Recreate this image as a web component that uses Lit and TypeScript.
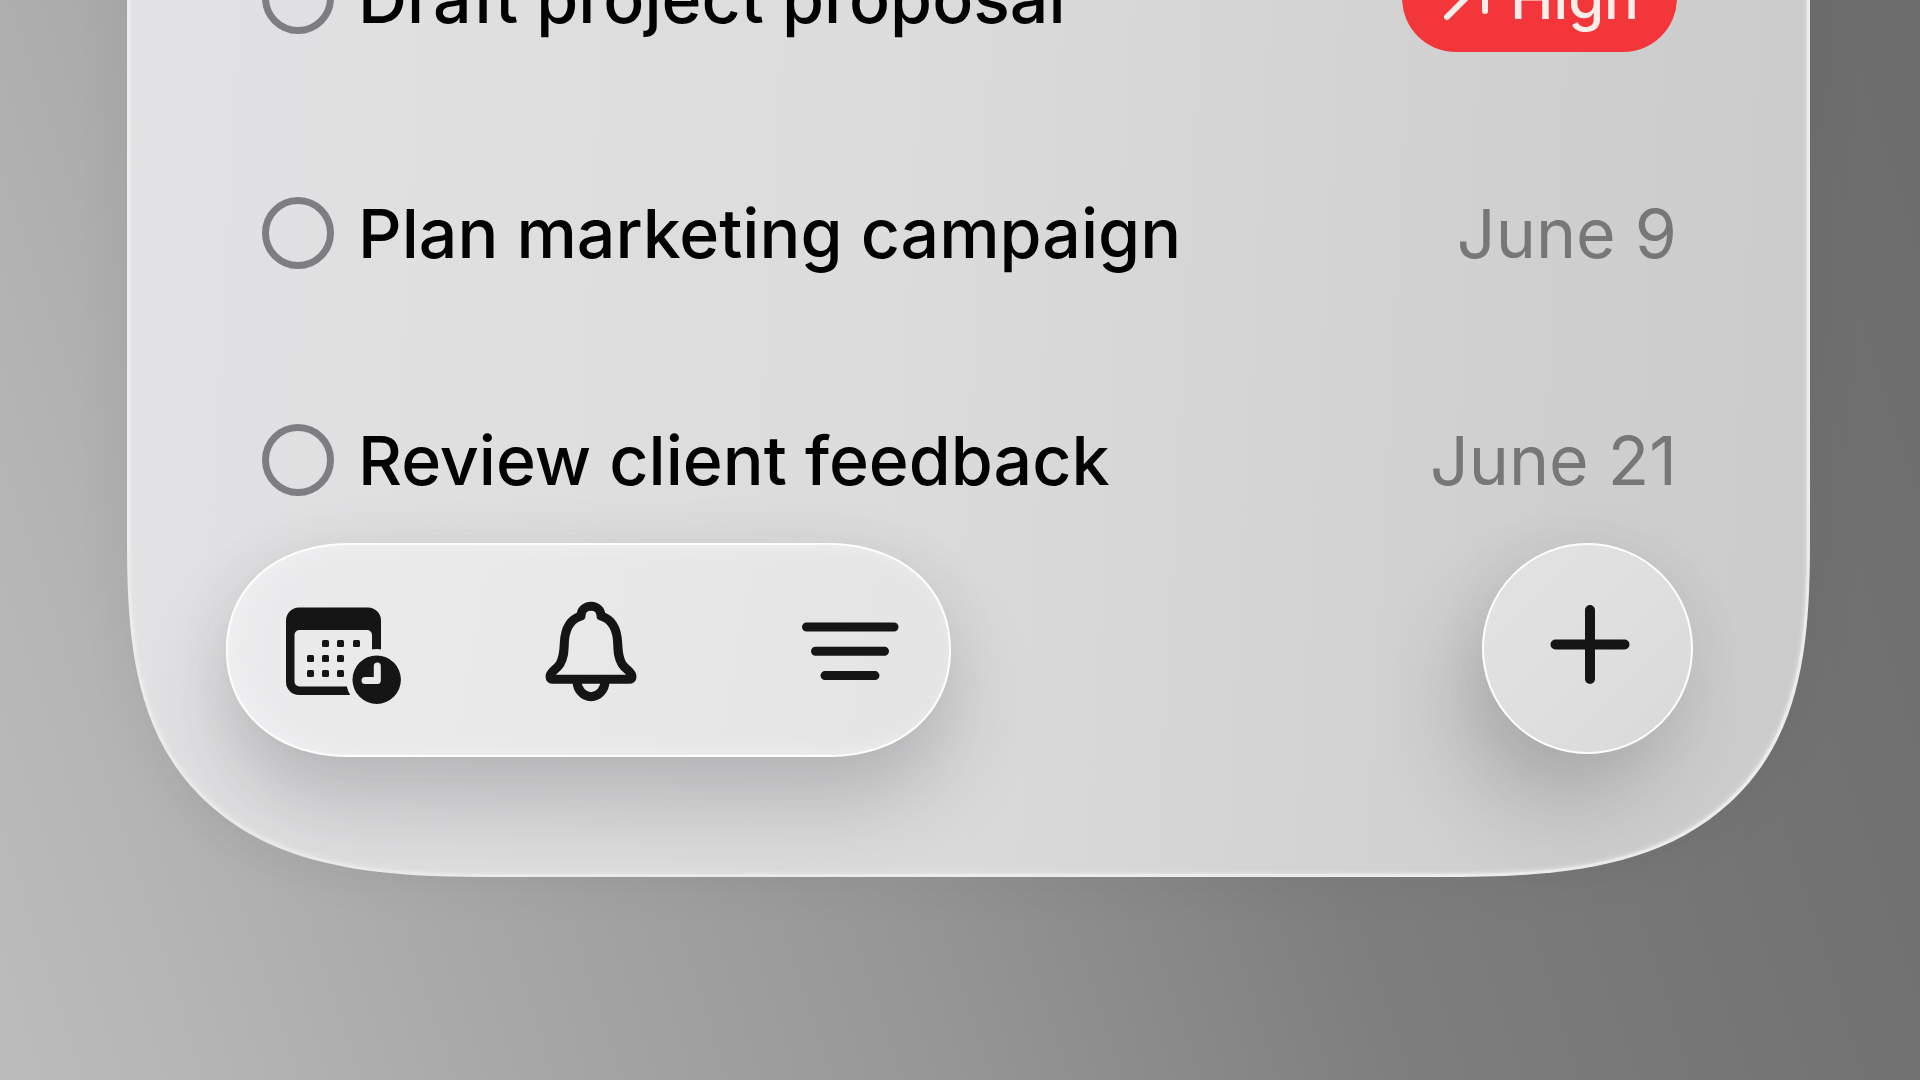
import { LitElement, html, css, svg, nothing } from "lit";
import { customElement, property } from "lit/decorators.js";

interface Task {
  id: string;
  title: string;
  due?: string;
  priority?: string;
}

const TASKS: Task[] = [
  { id: "draft", title: "Draft project proposal", priority: "High" },
  { id: "plan", title: "Plan marketing campaign", due: "June 9" },
  { id: "review", title: "Review client feedback", due: "June 21" },
];

const DOTS = [
  [36, 47], [51, 47], [67, 47],
  [21, 62], [36, 62], [51, 62],
  [21, 77], [36, 77], [51, 77],
];

@customElement("task-row")
export class TaskRow extends LitElement {
  @property({ attribute: false }) task!: Task;

  static styles = css`
    :host {
      display: flex;
      align-items: center;
      gap: 24px;
      min-height: 92px;
      font-size: 68px;
      line-height: 84px;
      white-space: nowrap;
    }
    .check {
      appearance: none;
      box-sizing: border-box;
      flex: none;
      width: 72px;
      height: 72px;
      margin: 0;
      border: 7px solid #7e7e81;
      border-radius: 50%;
    }
    .check:checked {
      background: #7e7e81;
    }
    .title {
      flex: 1;
      color: #020202;
      font-weight: 500;
    }
    .due {
      color: #777779;
    }
    .badge {
      display: flex;
      align-items: center;
      gap: 18px;
      height: 108px;
      padding: 0 38px 0 40px;
      border-radius: 54px;
      background: #f3363a;
      color: #fbeeea;
      font-size: 58px;
      font-weight: 500;
    }
    .arrow {
      width: 50px;
      height: 50px;
      fill: none;
      stroke: currentColor;
      stroke-width: 6;
      stroke-linecap: round;
      stroke-linejoin: round;
    }
  `;

  render() {
    const { id, title, due, priority } = this.task;
    return html`
      <input class="check" type="checkbox" id=${id} />
      <label class="title" for=${id}>${title}</label>
      ${priority
        ? html`<span class="badge">
            <svg class="arrow" viewBox="0 0 50 50" aria-hidden="true">
              <path d="M5 44 43 6M12 6H43V38" />
            </svg>
            ${priority}
          </span>`
        : nothing}
      ${due ? html`<span class="due">${due}</span>` : nothing}
    `;
  }
}

@customElement("task-toolbar")
export class TaskToolbar extends LitElement {
  static styles = css`
    :host {
      display: flex;
      align-items: flex-start;
      justify-content: space-between;
    }
    .pill,
    .add {
      box-sizing: border-box;
      border: 2px solid #fdfdfd;
    }
    .pill {
      display: flex;
      align-items: center;
      gap: 162px;
      height: 214px;
      padding: 0 51px 0 58px;
      border-radius: 107px;
      background: linear-gradient(100deg, #ebebed, #e9e9ea 40%, #e4e4e5);
      box-shadow:
        inset 8px 0 20px #f0f0f2,
        0 52px 84px rgba(60, 60, 62, 0.22),
        0 0 60px rgba(60, 60, 62, 0.06);
    }
    .add {
      display: grid;
      place-items: center;
      width: 211px;
      height: 211px;
      padding: 0;
      border-radius: 50%;
      background: linear-gradient(135deg, #e3e3e4, #dfdfe0 50%, #d9d9da);
      box-shadow:
        -24px 52px 84px rgba(60, 60, 62, 0.22),
        0 0 60px rgba(60, 60, 62, 0.06);
    }
    .tool {
      display: block;
      padding: 0;
      border: 0;
      background: none;
    }
    .icon {
      display: block;
      width: 96px;
      height: 112px;
      overflow: visible;
      fill: none;
      stroke: #151515;
      stroke-linecap: round;
      stroke-linejoin: round;
      stroke-width: 9;
    }
    .solid {
      fill: #151515;
      stroke: none;
    }
    .hands {
      stroke: #e9e9ea;
      stroke-width: 7;
    }
    .plus {
      display: block;
      width: 88px;
      height: 88px;
      stroke: #151515;
      stroke-width: 10;
      stroke-linecap: round;
    }
    @supports (corner-shape: superellipse(1.1)) {
      .pill {
        border-radius: 124px / 107px;
        corner-shape: superellipse(1.1);
      }
    }
  `;

  render() {
    return html`
      <div class="pill" role="toolbar" aria-label="Views">
        <button class="tool" type="button" aria-label="Schedule">
          <svg class="icon" viewBox="0 1 96 112" aria-hidden="true">
            <mask id="clock-gap" maskUnits="userSpaceOnUse" x="-4" y="0" width="110" height="120">
              <rect x="-4" width="110" height="120" fill="#fff" stroke="none" />
              <circle cx="90.7" cy="86.7" r="30.7" fill="#000" stroke="none" />
            </mask>
            <g mask="url(#clock-gap)">
              <path
                class="solid"
                fill-rule="evenodd"
                d="M13 14.5H82a13 13 0 0 1 13 13V89a13 13 0 0 1-13 13H13A13 13 0 0 1 0 89V27.500a13 13 0 0 1 13-13ZM13.500 37a5 5 0 0 0-5 5V88.500a5 5 0 0 0 5 5H81a5 5 0 0 0 5-5V42a5 5 0 0 0-5-5Z"
              />
            </g>
            ${DOTS.map(
              ([x, y]) => svg`<rect class="solid" x=${x} y=${y} width="7" height="7" rx="1.500" />`,
            )}
            <circle class="solid" cx="90.7" cy="86.7" r="24.2" />
            <path class="hands" d="M91.3 73V87.500H79" />
          </svg>
        </button>
        <button class="tool" type="button" aria-label="Reminders">
          <svg class="icon" viewBox="0 1 96 112" aria-hidden="true">
            <path
              d="M37 23C37 17 41.500 13.300 47 13.300S57 17 57 23C67 26 73 35 73.700 50C74 60 74.500 65 78 71C82 77 88 79 88 83.500Q88 86.300 85 86.300H9Q6 86.300 6 83.500C6 79 12 77 16 71C19.500 65 20 60 20.300 50C21 35 27 26 37 23Z"
            />
            <path d="M33 88A14 15.700 0 0 0 61 88" />
          </svg>
        </button>
        <button class="tool" type="button" aria-label="Filter">
          <svg class="icon" viewBox="0 1 96 112" aria-hidden="true">
            <path d="M4.500 34H92M13.500 58.300H82.500M23 82.600H73" />
          </svg>
        </button>
      </div>
      <button class="add" type="button" aria-label="Add task">
        <svg class="plus" viewBox="0 1 88 88" aria-hidden="true">
          <path d="M46 6V75M11.500 40.500H80.500" />
        </svg>
      </button>
    `;
  }
}

@customElement("app-root")
export class AppRoot extends LitElement {
  static styles = css`
    :host {
      box-sizing: border-box;
      display: flex;
      flex-direction: column;
      justify-content: flex-end;
      height: 100vh;
      overflow: hidden;
      padding: 0 110px 203px 127px;
      background: linear-gradient(
        72deg,
        #bcbcbc 0%,
        #b5b5b6 9%,
        #a8a8a9 22%,
        #969697 42%,
        #7e7e7f 62%,
        #737373 82%,
        #6c6c6c 100%
      );
      font-family: Inter, "Liberation Sans", sans-serif;
    }
    .panel {
      box-sizing: border-box;
      display: flex;
      flex-direction: column;
      flex: none;
      gap: 37px;
      padding: 200px 0 117px;
      border: 3px solid #ececec;
      border-top: 0;
      border-radius: 0 0 260px 260px;
      background: linear-gradient(93deg, #e2e2e4, #dcdcdd 45%, #d0d0d0 80%, #cbcbcb) border-box;
      box-shadow:
        inset 0 0 5px #ececec,
        0 0 60px rgba(0, 0, 0, 0.05);
    }
    .list {
      display: flex;
      flex-direction: column;
      gap: 135px;
      padding: 0 130px 0 132px;
    }
    .tools {
      margin: 0 114px 0 96px;
    }
    @supports (corner-shape: superellipse(1.5)) {
      .panel {
        border-radius: 0 0 370px 370px / 0 0 340px 340px;
        corner-shape: superellipse(1.5);
      }
    }
  `;

  render() {
    return html`
      <main class="panel">
        <section class="list" aria-label="Tasks">
          ${TASKS.map((task) => html`<task-row .task=${task}></task-row>`)}
        </section>
        <task-toolbar class="tools"></task-toolbar>
      </main>
    `;
  }
}
